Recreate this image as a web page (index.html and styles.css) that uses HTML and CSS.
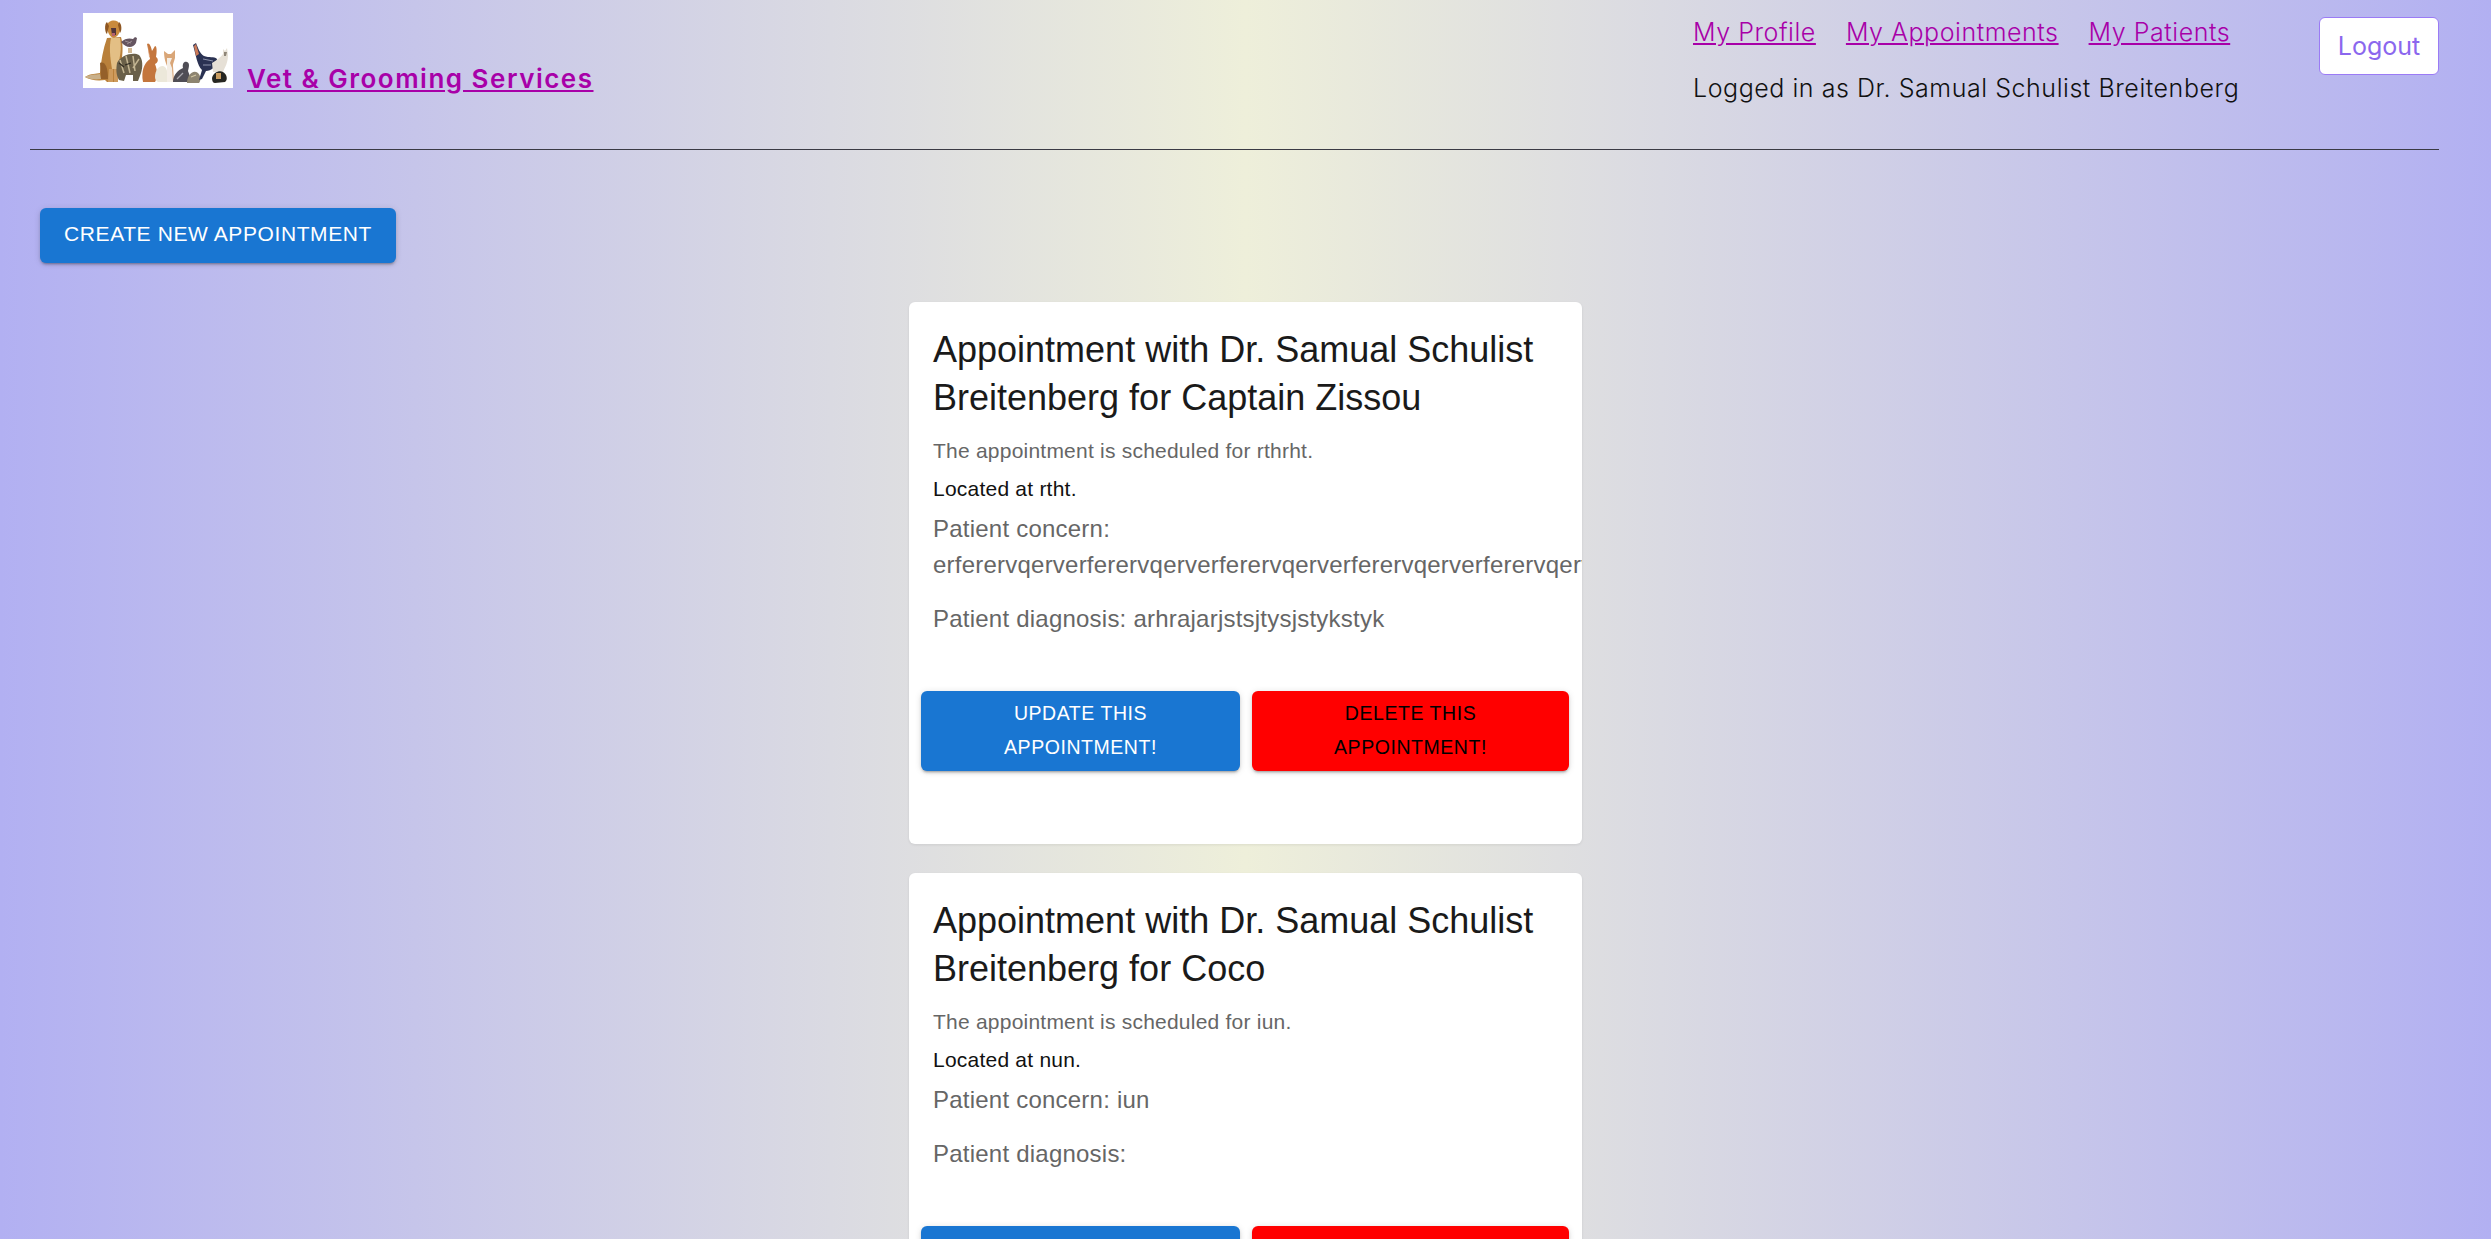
FILE: index.html
```html
<!DOCTYPE html>
<html lang="en">
<head>
  <meta charset="UTF-8">
  <meta name="viewport" content="width=device-width, initial-scale=1">
  <title>Vet &amp; Grooming Services</title>
  <link rel="stylesheet" href="styles.css">
</head>
<body>
  <header class="site-header">
    <div class="brand">
      <svg class="logo" viewBox="0 0 150 75" role="img" aria-label="Pets">
        <defs>
          <filter id="soft"><feGaussianBlur stdDeviation="0.35"/></filter>
        </defs>
        <rect width="150" height="75" fill="#fff"/>
        <g filter="url(#soft)">
          <!-- dog -->
          <path d="M2 64 C8 60 13 61 17 60 C18 48 20 36 24 25 L38 24 C41 34 39 44 38 54 L34 69 L24 69 L22 67 C14 68 7 67 2 64 Z" fill="#b9803a"/>
          <path d="M2 64 C7 61 12 62 17 61 L18 66 C12 67 6 66 2 64 Z" fill="#c9b08a"/>
          <path d="M28 25 L37 25 C39 36 37 44 34 56 L29 56 C27 44 26 34 28 25 Z" fill="#e3bf85"/>
          <path d="M17 50 C22 48 25 54 25 66 L18 66 Z" fill="#95612a"/>
          <path d="M26 56 L30 56 L30 69 L25 69 Z M31 56 L35 56 L35 69 L31 69 Z" fill="#cd9a5c"/>
          <path d="M24 12 C25 7 35 5 37 12 C38 18 36 23 31 25 C26 24 24 18 24 12 Z" fill="#c98a3e"/>
          <path d="M24 9 C21 11 22 20 24 21 L26 13 Z M36 9 C39 11 39 18 37 20 L35 12 Z" fill="#8e5722"/>
          <path d="M28 15 L33 15 L33 22 L29 22 Z" fill="#51343a"/>
          <path d="M29 20 L32 20 L32 23 L29 23 Z" fill="#b4606c"/>
          <!-- cat under hen -->
          <path d="M34 50 C38 42 50 39 56 42 C60 46 60 54 58 60 L55 68 L50 68 L50 62 L43 62 L41 68 L36 67 C33 62 33 56 34 50 Z" fill="#6a6048"/>
          <path d="M37 47 L41 60 M43 43 L47 60 M50 43 L52 58 M56 46 L50 55" stroke="#c2b492" stroke-width="1.5" fill="none"/>
          <path d="M36 50 L41 54 M42 52 L48 50" stroke="#2f2a20" stroke-width="1.2" fill="none"/>
          <!-- hen -->
          <path d="M38 29 C42 25 47 25 50 26 L52 24 L54 25 L53 30 C50 35 44 36 38 29 Z" fill="#655461"/>
          <path d="M42 28 L48 30 M44 31 L49 28" stroke="#a89aa0" stroke-width="0.8"/>
          <path d="M46 35 L46 40 M48 35 L48 40" stroke="#a5722f" stroke-width="1"/>
          <!-- rabbit -->
          <path d="M60 69 C58 58 61 50 67 46 L64 31 C66 29 68 33 69 38 L72 33 C74 33 74 39 73 44 C76 46 75 50 72 51 C75 58 74 66 72 69 Z" fill="#c4763c"/>
          <path d="M65 33 L67 44 L66 44 Z" fill="#e0a57e"/>
          <!-- white bird -->
          <path d="M72 64 C72 56 78 51 82 54 C85 57 85 64 84 69 L75 69 C73 68 72 66 72 64 Z" fill="#ece8da"/>
          <!-- chihuahua -->
          <path d="M81 38 L85 41 L88 41 L92 37 L92 45 C91 49 90 50 90 53 L91 69 L84 69 L84 53 C83 50 81 46 81 38 Z" fill="#d9a678"/>
          <path d="M84 45 L89 45 L87 50 L89 55 L90 69 L84 69 Z" fill="#f4eee6"/>
          <!-- grey cat -->
          <path d="M90 69 C90 62 95 57 100 55 C99 51 101 48 104 49 C107 50 106 54 105 58 C107 62 107 66 106 69 Z" fill="#4f4d55"/>
          <path d="M94 66 L100 60" stroke="#a9a7ad" stroke-width="1.3"/>
          <!-- small brown -->
          <path d="M104 70 C104 62 110 56 115 60 C118 63 118 68 116 70 Z" fill="#8d8470"/>
          <path d="M108 64 L113 62" stroke="#d0c49f" stroke-width="1.3"/>
          <!-- rooster -->
          <path d="M110 32 L113 30 C115 35 117 41 121 43 C126 45 131 43 134 46 C134 54 128 58 123 58 L119 66 L116 67 L119 57 C114 52 113 42 110 32 Z" fill="#2b3252"/>
          <path d="M111 33 L113 31 L116 41 L113 43 Z" fill="#cb7a58"/>
          <path d="M120 46 L130 48 M120 52 L128 52" stroke="#8d93ad" stroke-width="1"/>
          <!-- white cat -->
          <path d="M129 50 C134 47 138 44 140 41 L140 36 L142 38 L144 35 L145 42 C145 50 142 54 140 59 L130 59 Z" fill="#e6e0d6"/>
          <path d="M141 39 L144 39 L143 43 L141 43 Z" fill="#8e8578"/>
          <!-- guinea pig -->
          <path d="M129 65 C130 60 136 57 140 59 C144 61 145 67 142 69 L132 70 C130 70 129 68 129 65 Z" fill="#282620"/>
          <path d="M133 60 L138 60 L138 66 L133 66 Z" fill="#c99c60"/>
        </g>
      </svg>
      <a class="brand-link" href="#">Vet &amp; Grooming Services</a>
    </div>
    <div class="user-nav">
      <nav class="nav-links">
        <a href="#">My Profile</a>
        <a href="#">My Appointments</a>
        <a href="#">My Patients</a>
      </nav>
      <p class="logged-in">Logged in as Dr. Samual Schulist Breitenberg</p>
    </div>
    <button class="logout-btn" type="button">Logout</button>
  </header>
  <hr class="header-rule">

  <button class="btn btn-blue create-btn" type="button">Create new appointment</button>

  <main class="appointments">
    <article class="card">
      <div class="card-content">
        <h2>Appointment with Dr. Samual Schulist Breitenberg for Captain Zissou</h2>
        <p class="scheduled">The appointment is scheduled for rthrht.</p>
        <p class="location">Located at rtht.</p>
        <p class="details">Patient concern: erferervqerverferervqerverferervqerverferervqerverferervqerverfererv</p>
        <p class="details">Patient diagnosis: arhrajarjstsjtysjstykstyk</p>
      </div>
      <div class="card-actions">
        <button class="btn btn-blue btn-card" type="button">Update this appointment!</button>
        <button class="btn btn-red btn-card" type="button">Delete this appointment!</button>
      </div>
    </article>

    <article class="card">
      <div class="card-content">
        <h2>Appointment with Dr. Samual Schulist Breitenberg for Coco</h2>
        <p class="scheduled">The appointment is scheduled for iun.</p>
        <p class="location">Located at nun.</p>
        <p class="details">Patient concern: iun</p>
        <p class="details">Patient diagnosis:</p>
      </div>
      <div class="card-actions">
        <button class="btn btn-blue btn-card" type="button">Update this appointment!</button>
        <button class="btn btn-red btn-card" type="button">Delete this appointment!</button>
      </div>
    </article>
  </main>
</body>
</html>
```

FILE: styles.css
```css
html {
  height: 1239px;
  overflow: hidden;
}
body {
  margin: 0;
  height: 1239px;
  overflow: hidden;
  font-family: "Liberation Sans", Arial, sans-serif;
  background: linear-gradient(to right, #b2b0f2, #eeefda 50%, #b2b0f2);
}
a {
  color: #a800a8;
}

.site-header {
  display: flex;
  height: 149px;
  padding: 0 52px 0 83px;
  font-family: Inter, sans-serif;
}
.brand {
  display: flex;
  align-items: flex-start;
  flex: 1;
  padding-top: 13px;
}
.logo {
  width: 150px;
  height: 75px;
}
.brand-link {
  margin: 50px 0 0 14px;
  font-size: 26px;
  font-weight: 600;
  letter-spacing: 1.5px;
  line-height: 32px;
}
.user-nav {
  width: 626px;
  padding-top: 14px;
}
.nav-links {
  display: flex;
  gap: 30px;
}
.nav-links a {
  font-size: 25px;
  font-weight: 300;
  letter-spacing: 0.55px;
  line-height: 36px;
}
.logged-in {
  margin: 20px 0 0;
  font-size: 25px;
  font-weight: 300;
  letter-spacing: 0.55px;
  line-height: 36px;
  color: #111;
}
.logout-btn {
  width: 120px;
  height: 58px;
  margin-top: 17px;
  background: #fff;
  border: 1px solid #9b7bf5;
  border-radius: 6px;
  color: #8b67ee;
  font-family: Inter, sans-serif;
  font-size: 25px;
  font-weight: 400;
}

.header-rule {
  height: 1px;
  margin: 0 52px 0 30px;
  border: none;
  background: #3a3a44;
}

.btn {
  border: none;
  border-radius: 6px;
  font-family: "Liberation Sans", Arial, sans-serif;
  font-size: 21px;
  letter-spacing: 0.6px;
  text-transform: uppercase;
  box-shadow: 0 3px 2px -2px rgba(0,0,0,0.2), 0 2px 3px 0 rgba(0,0,0,0.14), 0 1px 7px 0 rgba(0,0,0,0.12);
}
.btn-blue {
  background: #1976d2;
  color: #fff;
}
.btn-red {
  background: #f00;
  color: #000;
}
.create-btn {
  display: block;
  width: 356px;
  height: 55px;
  margin: 58px 0 0 40px;
  padding: 0 0 3px;
}

.appointments {
  display: flex;
  flex-direction: column;
  align-items: center;
  gap: 29px;
  margin-top: 39px;
}
.card {
  width: 673px;
  flex-shrink: 0;
  overflow: hidden;
  background: #fff;
  border-radius: 6px;
  box-shadow: 0 1px 3px rgba(0,0,0,0.08);
}
.card-content {
  padding: 24px 24px 36px;
}
.card h2 {
  margin: 0 0 14px;
  font-size: 36px;
  font-weight: 400;
  line-height: 48px;
  color: #1a1a1a;
}
.scheduled,
.location {
  margin: 0 0 8px;
  font-size: 21px;
  letter-spacing: 0.225px;
  line-height: 30px;
}
.scheduled {
  color: #666;
}
.location {
  margin-bottom: 7px;
  color: #111;
}
.details {
  margin: 0 0 18px;
  font-size: 24px;
  letter-spacing: 0.225px;
  line-height: 36px;
  color: #666;
}
.card-actions {
  display: flex;
  gap: 12px;
  padding: 0 12px 73px;
}
.btn-card {
  height: 80px;
  padding: 0 60px;
  font-size: 19.5px;
  letter-spacing: 0.55px;
  line-height: 33.6px;
}
.btn-card:first-child {
  width: 319px;
}
.btn-card:last-child {
  width: 317px;
}
```
